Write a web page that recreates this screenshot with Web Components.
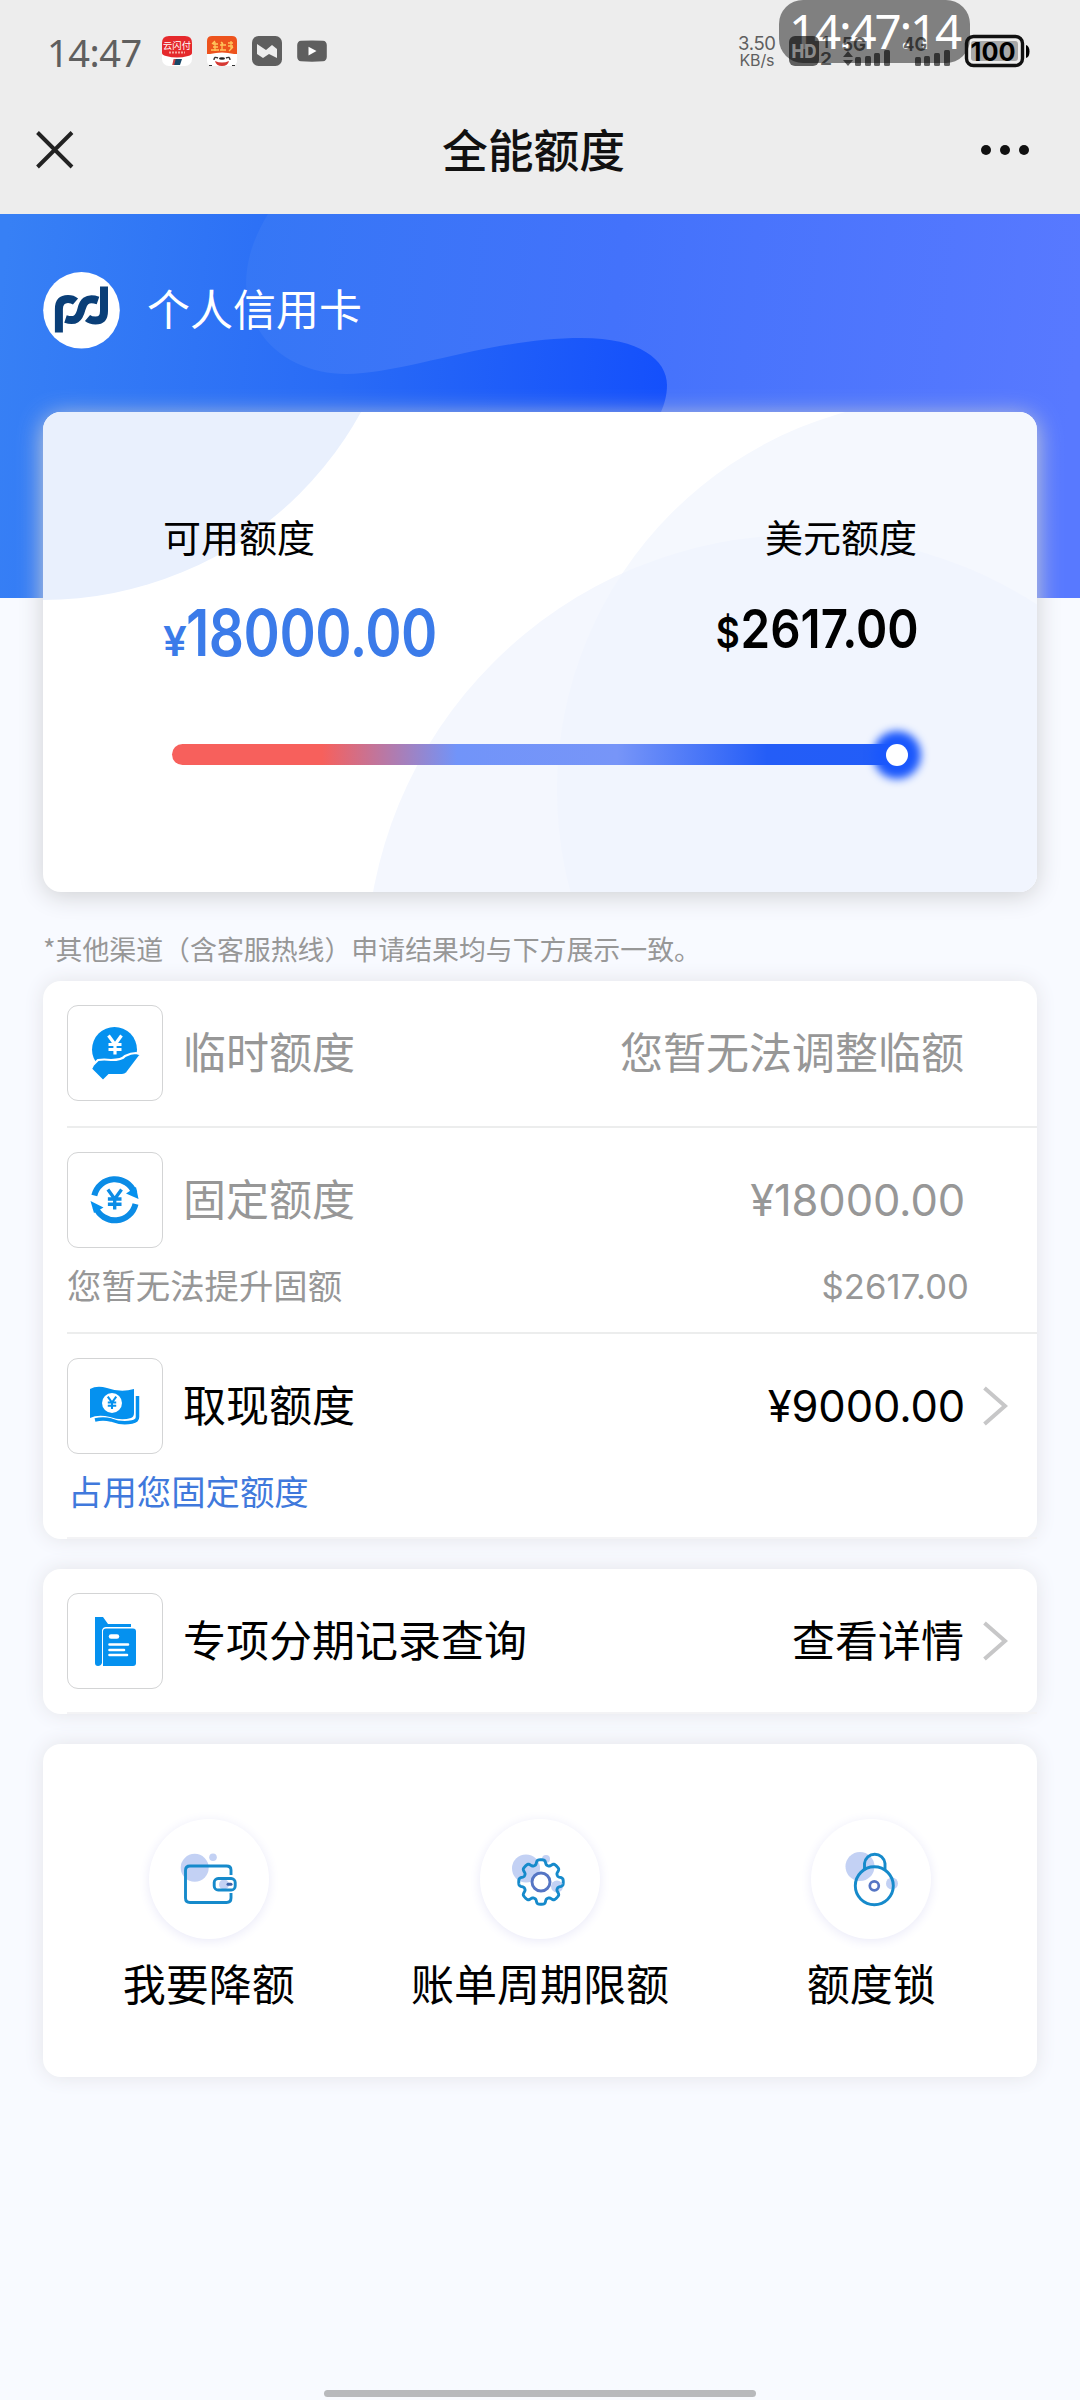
<!DOCTYPE html>
<html lang="zh-CN">
<head>
<meta charset="utf-8">
<title>全能额度</title>
<style>
html,body{margin:0;padding:0}
body{width:1080px;height:2400px;overflow:hidden;background:#f8faff;color:#000;font-family:"Noto Sans CJK SC",sans-serif}
</style>
</head>
<body>
<quota-app></quota-app>
<script>
const define=(name,html)=>customElements.define(name,class extends HTMLElement{
  constructor(){
    super();
    const t=document.createElement('template');
    t.innerHTML=typeof html==='function'?html(this):html;
    this.attachShadow({mode:'open'}).appendChild(t.content.cloneNode(true));
  }
});

define('status-bar',`
<style>
:host{display:flex;align-items:center;justify-content:space-between;height:106px;position:relative;padding:0 45px 0 47px;box-sizing:border-box;color:#5f5f5f}
.left{display:flex;align-items:center;gap:15px}
.time{font:400 38px/50px "Noto Sans";letter-spacing:-.500px;width:100px;white-space:nowrap;margin-top:-3px}
svg{display:block}
.left svg{margin-top:-4px}
.clock{position:absolute;left:779px;top:0;width:191px;height:63px;border-radius:24px;background:#808080;color:#fff;font:400 47.500px/61px "Noto Sans";text-align:center;letter-spacing:-2.200px}
.right{position:relative}
</style>
<div class="left">
 <span class="time">14:47</span>
 <svg width="30" height="30" viewBox="0 0 30 30"><rect width="30" height="30" rx="7" fill="#fff"/><path d="M7 0H23Q30 0 30 7V17Q30 19 26 20Q15 23 4 20Q0 19 0 17V7Q0 0 7 0Z" fill="#e5292c"/><text x="15" y="13" text-anchor="middle" font-family="Noto Sans CJK SC" font-size="9.3" fill="#fff">云闪付</text><path d="M7 16.5H23" stroke="#f6a9a0" stroke-width="1.8" stroke-dasharray="2 1"/><path d="M12 23h8l-2 6h-7z" fill="#174767"/><path d="M11.7 23h2l-1.5 6h-2z" fill="#c44"/></svg>
 <svg width="30" height="30" viewBox="0 0 30 30"><rect width="30" height="30" rx="5" fill="#fff"/><path d="M5 0H25Q30 0 30 5V18H0V5Q0 0 5 0Z" fill="#ed531d"/><path d="M5 8l3-3m-2 3h5m-5 3h5m-7 3h8M8 6v9M14 6l2 2m-3 1h6m-4-3v8m-2 0h6M21 7h5m-2-2v8m-3-3h5m-4 5l4-4" stroke="#ffc65c" stroke-width="1.3" fill="none"/><path d="M3 18Q15 15 27 18V25Q15 34 3 25Z" fill="#fff"/><path d="M7 24q0-4 4-2m8 0q4-2 4 2" stroke="#333" stroke-width="1.4" fill="none"/><ellipse cx="15" cy="22.500" rx="3" ry="1.200" fill="#222"/><path d="M8 25Q15 28 22 25Q21 30 15 30Q9 30 8 25Z" fill="#d63832"/><path d="M2 29.500h3m20 0h3" stroke="#333" stroke-width="1"/></svg>
 <svg width="30" height="30" viewBox="0 0 30 30"><rect width="30" height="30" rx="6.5" fill="#5f5f5f"/><path d="M5 8L14 14L20 9L25 13V22L17 18L11 22L5 18Z" fill="#ededed"/></svg>
 <svg width="30" height="30" viewBox="0 0 30 30"><path d="M4 4.8Q15 4 26 4.8Q29.5 5 29.8 9V21Q29.5 25 26 25.3Q15 26 4 25.3Q.5 25 .2 21V9Q.5 5 4 4.8Z" fill="#5f5f5f"/><path d="M11.5 10.7L19.5 15L11.5 19.5Z" fill="#fff"/></svg>
</div>
<div class="clock">14:47:14</div>
<svg class="right" width="305" height="106" viewBox="730 0 305 106" font-family="Inter" fill="#000">
 <g fill="#5f5f5f"><text x="738" y="50" font-size="18.5" textLength="38">3.50</text><text x="739.5" y="66" font-size="16" textLength="35">KB/s</text></g>
 <g fill-opacity=".6">
  <rect x="789" y="36" width="30" height="30" rx="6"/>
  <text x="822" y="48" font-size="16" font-weight="700">1</text><text x="820" y="65" font-size="17" font-weight="700" textLength="12" lengthAdjust="spacingAndGlyphs">2</text>
  <text x="842" y="51" font-size="19" font-weight="700" textLength="24" lengthAdjust="spacingAndGlyphs">5G</text>
  <path d="M848 51l5 6h-10zM848 66l5-6h-10z"/>
  <rect x="855" y="57" width="6" height="9" rx="1.5"/><rect x="865" y="56" width="6" height="10" rx="1.5"/><rect x="874" y="53" width="6" height="13" rx="1.5"/><rect x="884" y="50" width="6" height="16" rx="1.5"/>
  <text x="903" y="51" font-size="19" font-weight="700" textLength="24" lengthAdjust="spacingAndGlyphs">4G</text>
  <rect x="915" y="57" width="6" height="9" rx="1.5"/><rect x="924" y="56" width="6" height="10" rx="1.5"/><rect x="934" y="53" width="6" height="13" rx="1.5"/><rect x="944" y="50" width="6" height="16" rx="1.5"/>
 </g>
 <text x="791.500" y="58" font-size="19" font-weight="800" fill="#8b8b8b" textLength="25" lengthAdjust="spacingAndGlyphs">HD</text>
 <rect x="966.5" y="36.5" width="56" height="29" rx="7" fill="none" stroke="#111" stroke-width="3.4"/>
 <rect x="971" y="41" width="47" height="20" rx="3" fill="#a8a8a8"/>
 <path d="M1026 45Q1029.500 46 1029.500 51.500Q1029.500 57 1026 58Z"/>
 <text x="970.500" y="60.500" font-size="25" font-weight="700" textLength="45" lengthAdjust="spacingAndGlyphs">100</text>
</svg>`);

define('nav-bar',`
<style>
:host{display:flex;align-items:center;justify-content:space-between;height:108px;padding:0 50px 20px 36px;box-sizing:border-box}
svg{display:block}
h1{margin:-4px 0 0 13px;font:500 45.800px/60px "Noto Sans CJK SC";color:#111}
.s{width:38px;height:38px;margin-top:-1px}
.d{margin-top:-1px}
</style>
<svg class="s" viewBox="0 0 38 38"><path d="M1.500 1.500L36 36M36 1.500L1.500 36" stroke="#222" stroke-width="3.900"/></svg>
<h1><slot></slot></h1>
<svg class="d" width="50" height="12" viewBox="0 0 50 12" fill="#111"><circle cx="6" cy="6" r="5"/><circle cx="25" cy="6" r="5"/><circle cx="44" cy="6" r="5"/></svg>`);

define('hero-banner',`
<style>
:host{display:block;position:relative;height:384px;margin-bottom:-186px}
.bg{position:absolute;inset:0}
.who{position:relative;display:flex;align-items:center;gap:27px;padding:58px 43px 0;color:#fff;font-size:43px;line-height:70px}
.who span{margin-top:-8px}
svg{display:block}
</style>
<svg class="bg" width="1080" height="384" viewBox="0 214 1080 384">
<defs><linearGradient id="a" gradientUnits="userSpaceOnUse" x1="0" y1="300" x2="690" y2="370"><stop offset="0" stop-color="#3780f5"/><stop offset=".5" stop-color="#296bf6"/><stop offset="1" stop-color="#134efc"/></linearGradient>
<linearGradient id="b" gradientUnits="userSpaceOnUse" x1="240" y1="240" x2="1080" y2="330"><stop offset="0" stop-color="#3577f5"/><stop offset=".45" stop-color="#4372fb"/><stop offset="1" stop-color="#5879ff"/></linearGradient></defs>
<rect y="214" width="1080" height="384" fill="url(#a)"/>
<path d="M268 214C240 260 241 300 259 330C276 359 312 374 346 374C405 374 490 338 582 338C640 338 667 360 667 385C667 396 664 405 661 412V598H1080V214Z" fill="url(#b)"/>
</svg>
<div class="who">
<svg width="77" height="77" viewBox="43 272 77 77"><circle cx="81.500" cy="310.300" r="38.300" fill="#fff"/><g fill="none" stroke="#0a3f78" stroke-width="8"><path d="M58.900 332.500V309Q58.900 299 68 299Q72.500 299 75.500 301.500"/><path d="M98 300.500C86 296.500 83 303 81.500 309C79 319 75 322 65.500 319"/><path d="M104 286.500V311Q104 320.500 95.500 320.500Q90.500 320.500 87.500 318"/></g></svg>
<span><slot></slot></span></div>`);

define('limit-card',`
<style>
:host{display:block;position:relative;margin:0 43px;height:480px;border-radius:18px;background:#fff;box-shadow:0 4px 25px #cfd0d3}
.deco{position:absolute;left:0;top:0;border-radius:18px}
.body{position:relative;padding:99px 120px 0}
.cols{display:flex;justify-content:space-between}
.l{font-size:38px;line-height:50px;height:50px}
.cols>div:last-child{display:flex;flex-direction:column;align-items:flex-end}
.n{font-family:Inter;font-weight:600;margin-top:37px;height:70px;white-space:nowrap;transform:scaleX(.86)}
.cny{color:#3b7be9;font-size:64px;line-height:70px;transform-origin:0 0;letter-spacing:-.500px}
.cny small{display:inline-block;font-size:41px;transform:scaleX(1.200);transform-origin:0 0;margin-right:4px}
.usd{font-size:54px;line-height:61px;transform:scaleX(.88);transform-origin:100% 0;letter-spacing:0;margin-right:-2px}
.usd small{font-size:42px;letter-spacing:1px}
.bar{height:21px;border-radius:11px;width:736px;margin:76px 0 0 9px;display:flex;justify-content:flex-end;align-items:center;background:linear-gradient(90deg,#f7605c 0,#f7605c 150px,#7194f9 285px,#7795f8 445px,#245df7 595px,#225df8)}
.knob{width:22px;height:22px;border-radius:50%;background:#fff;box-shadow:0 0 9px 13px #1b58fc;flex:none}
</style>
<svg class="deco" width="994" height="480" viewBox="43 412 994 480"><defs><clipPath id="k"><circle cx="949" cy="790" r="392"/></clipPath></defs><circle cx="43" cy="237" r="363" fill="#e9f0fd"/><circle cx="949" cy="790" r="392" fill="#f5f8fe"/><circle cx="801" cy="970" r="435" fill="#f4f7fe"/><circle cx="801" cy="970" r="435" fill="#f1f5fe" clip-path="url(#k)"/></svg>
<div class="body"><div class="cols">
<div><div class="l">可用额度</div><div class="n cny"><small>¥</small>18000.00</div></div>
<div><div class="l">美元额度</div><div class="n usd"><small>$</small>2617.00</div></div>
</div><div class="bar"><div class="knob"></div></div></div>`);

define('foot-note',`<style>:host{display:block;margin:37px 43px 0;height:52px;font-size:26.900px;line-height:40px;color:#979797;white-space:nowrap}</style><slot></slot>`);

define('panel-card',`<style>:host{display:block;margin:0 43px 30px;background:#fff;border-radius:18px;box-shadow:0 0 20px #e3e4e8;overflow:visible}</style><slot></slot>`);

const yen=(x,y,s,c)=>`<g transform="translate(${x} ${y}) scale(${s})" fill="none" stroke="${c}" stroke-width="3.200"><path d="M-6.500 -9L0 0L6.500 -9M0 0V10M-6.500 0H6.500M-6.500 5H6.500"/></g>`;
const icons={
 hand:`<circle cx="47.500" cy="44.500" r="22.500"/><path d="M26 60L31 55Q37 54 44 55Q55 55 58 51Q64 48 69 48L74 49.500L60 68Q58 70 55 70H42L36 76L24 64Z" stroke="#fff" stroke-width="2.200"/>${yen(48,39.500,1,'#fff')}`,
 cycle:`<path d="M27.300 43.500A21 21 0 0 1 67.500 41" fill="none" stroke="#0b8ce6" stroke-width="6"/><path d="M68.500 52A21 21 0 0 1 28.500 55" fill="none" stroke="#0b8ce6" stroke-width="6"/><path d="M69 35L71.500 47L59 41.500Z"/><path d="M27 61L23.500 49L36.500 55.500Z"/>${yen(47.700,47,1.050,'#0b8ce6')}`,
 cash:`<path d="M23 34V31Q30 27 40 30Q54 35 67 31V55Q67 59 64 60Q54 63 43 59Q31 56 23 60Z"/><path d="M70.500 38V59Q70.500 63 65 64Q54 66 44 62Q36 60 28 62" fill="none" stroke="#0591ef" stroke-width="3.500"/><circle cx="45" cy="45" r="10" fill="#fff"/>${yen(45,44.500,.650,'#0591ef')}`,
 doc:`<path d="M28 24H36L41 31H64V34H39Q36 34 35 37V70Q34 73 31 73Q28 73 28 70Z"/><path d="M39 35.500H66Q69 35.500 69 38.500V70Q69 73 66 73H36V38.500Q36 35.500 39 35.500Z"/><path d="M44 43.500H50" stroke="#fff" stroke-width="4.500" stroke-linecap="round"/><path d="M42.500 51.500H61M42.500 57H57M42.500 62H60" stroke="#fff" stroke-width="2.600" stroke-linecap="round"/>`
};

define('limit-row',el=>`
<style>
:host{display:block;padding:24px 0 0 24px;color:#000}
:host([muted]){color:#979797}
.in{border-bottom:2px solid #eceded}
:host([last]) .in{border-bottom-color:#f3f3f5}
.main{display:flex;align-items:center;height:96px;padding-right:73px;position:relative;font-size:43px}
.box{width:96px;height:96px;box-sizing:border-box;border:1.500px solid #d3d4d5;border-radius:11px;display:block;flex:none}
.box svg{display:block;margin:-1px}
.t{margin:-7px auto 0 20px;line-height:60px}
.v{line-height:60px;margin-top:-7px}
.v.num{font-family:Inter;margin-top:0;font-size:43.500px;letter-spacing:-.150px;margin-right:-1px}
.go{position:absolute;right:29px;top:28px}
.sub{display:flex;justify-content:space-between;padding:11px 68px 0 0;font-size:34.400px;line-height:50px;height:73px}
.none{height:25px}
::slotted([slot=amount]){font-family:Inter;font-size:34.600px;letter-spacing:.100px;line-height:54px}
::slotted([slot=link]){color:#4079dc;margin-left:1px}
:host([last]) .sub{height:72px}
:host([last]) .none{height:23px}
</style>
<div class="in"><div class="main"><span class="box"><svg width="96" height="96" viewBox="0 0 96 96" fill="#0591ef">${icons[el.getAttribute('icon')]}</svg></span>
<span class="t">${el.getAttribute('label')}</span><span class="v ${el.getAttribute('value')[0]==='¥'?'num':''}">${el.getAttribute('value')}</span>
${el.hasAttribute('go')?'<svg class="go" width="26" height="40" viewBox="0 0 26 40"><path d="M2.500 2L23 20L2.500 38" fill="none" stroke="#c7c7c8" stroke-width="4"/></svg>':''}</div>
${el.children.length?'<div class="sub"><slot name="link"></slot><slot name="text"></slot><slot name="amount"></slot></div>':'<div class="none"></div>'}</div>`);

const gear=(()=>{let d='';for(let i=0;i<240;i++){const a=i/240*2*Math.PI,k=Math.tanh(2*Math.cos(8*a)+.600),r=19.800+2.500*k;d+=(i?'L':'M')+(61+r*Math.sin(a)).toFixed(2)+' '+(63-r*Math.cos(a)).toFixed(2)}return d+'Z'})();
const tools={
 wallet:`<circle cx="45.700" cy="48.800" r="14" fill="#c3d1f4"/><circle cx="64" cy="38.200" r="3.800" fill="#c3d1f4"/><circle cx="75" cy="65.500" r="5" fill="#c3d1f4"/><g fill="none" stroke="#168acb" stroke-width="2.900"><path d="M82 56V51Q82 47 77.500 47H41Q36.500 47 36.500 51.500V79Q36.500 83.500 41 83.500H77.500Q82 83.500 82 79V74"/><rect x="65.200" y="59.500" width="21" height="11.500" rx="4"/></g><path d="M79 65.300H82" stroke="#3c62a8" stroke-width="3" stroke-linecap="round"/>`,
 gear:`<circle cx="46" cy="49.500" r="14" fill="#c3d1f4"/><circle cx="66" cy="40" r="4" fill="#c3d1f4"/><circle cx="77" cy="67.500" r="6" fill="#c3d1f4"/><path d="${gear}" fill="none" stroke="#168acb" stroke-width="2.900"/><circle cx="61" cy="63" r="9" fill="#fff" stroke="#5575c4" stroke-width="2.900"/>`,
 lock:`<circle cx="49" cy="47.500" r="14.500" fill="#c3d1f4"/><circle cx="81" cy="64.500" r="6" fill="#c3d1f4"/><g fill="none" stroke="#168acb" stroke-width="2.900"><path d="M53.500 50.500V44.500A10.300 10.300 0 0 1 74 44.500V50.500"/><circle cx="63.300" cy="66.800" r="19"/></g><circle cx="63.300" cy="66.800" r="4.500" fill="#fff" stroke="#5575c4" stroke-width="2.700"/>`
};
define('tool-item',el=>`
<style>
:host{flex:1;display:flex;flex-direction:column;align-items:center;font-size:43px;line-height:60px}
.c{width:120px;height:120px;border-radius:50%;background:#fff;box-shadow:0 2px 12px #e9e9f8;margin-bottom:13px}
svg{display:block}
</style><div class="c"><svg width="120" height="120" viewBox="0 0 120 120">${tools[el.getAttribute('icon')]}</svg></div><slot></slot>`);
define('tool-bar',`<style>:host{display:flex;height:333px;padding-top:75px;box-sizing:border-box}</style><slot></slot>`);

define('quota-app',`
<style>
:host{display:flex;flex-direction:column;width:1080px;height:2400px;background:#f8faff}
header{background:#ededed;flex:none}
.home{width:432px;height:7px;border-radius:4px;background:#b8b9bc;margin:auto auto 3px}
</style>
<header><status-bar></status-bar><nav-bar>全能额度</nav-bar></header>
<hero-banner>个人信用卡</hero-banner>
<limit-card></limit-card>
<foot-note>*其他渠道（含客服热线）申请结果均与下方展示一致。</foot-note>
<panel-card>
<limit-row muted icon="hand" label="临时额度" value="您暂无法调整临额"></limit-row>
<limit-row muted icon="cycle" label="固定额度" value="¥18000.00"><span slot="text">您暂无法提升固额</span><span slot="amount">$2617.00</span></limit-row>
<limit-row last go icon="cash" label="取现额度" value="¥9000.00"><span slot="link">占用您固定额度</span></limit-row>
</panel-card>
<panel-card><limit-row last go icon="doc" label="专项分期记录查询" value="查看详情"></limit-row></panel-card>
<panel-card><tool-bar><tool-item icon="wallet">我要降额</tool-item><tool-item icon="gear">账单周期限额</tool-item><tool-item icon="lock">额度锁</tool-item></tool-bar></panel-card>
<div class="home"></div>`);
</script>
</body>
</html>
